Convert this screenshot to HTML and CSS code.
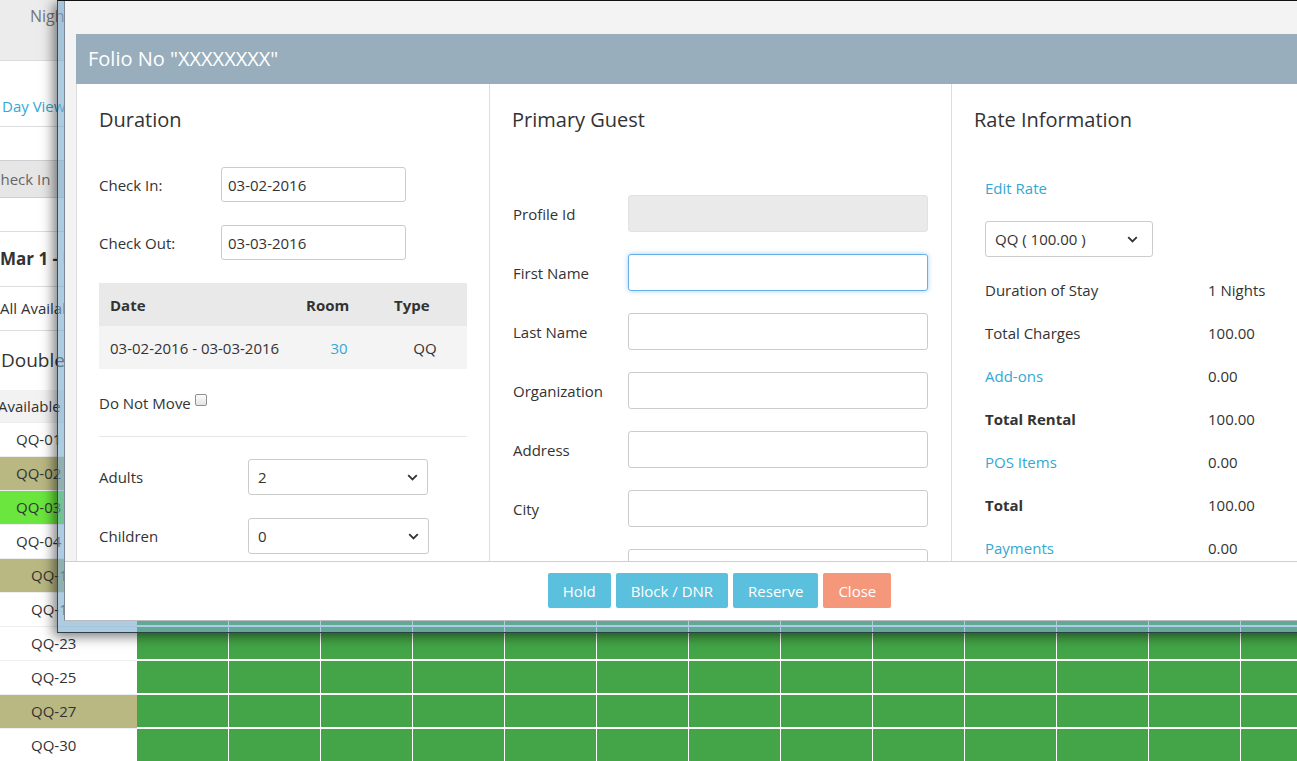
FILE: index.html
```html
<!DOCTYPE html>
<html>
<head>
<meta charset="utf-8">
<link rel="stylesheet" href="styles.css">
</head>
<body>
<div class="page">
  <div class="bg-head"><span>Nights</span></div>
  <div class="bg-sec sec-day"><span class="link">Day View</span></div>
  <div class="bg-sec sec-btn"><span class="ghost-btn">Check In</span></div>
  <div class="bg-sec sec-date">Mar 1 - Mar 31</div>
  <div class="bg-sec sec-avail">All Available</div>
  <div class="bg-sec sec-type">Double Queen</div>
  <div class="bg-row row-availhead"><div class="lbl">Available</div></div>
  <div class="bg-row"><div class="lbl up">QQ-01</div><div class="cells"><i></i><i></i><i></i><i></i><i></i><i></i><i></i><i></i><i></i><i></i><i></i><i></i><i></i></div></div>
  <div class="bg-row"><div class="lbl up olive">QQ-02</div><div class="cells"><i></i><i></i><i></i><i></i><i></i><i></i><i></i><i></i><i></i><i></i><i></i><i></i><i></i></div></div>
  <div class="bg-row"><div class="lbl up lime">QQ-03</div><div class="cells"><i></i><i></i><i></i><i></i><i></i><i></i><i></i><i></i><i></i><i></i><i></i><i></i><i></i></div></div>
  <div class="bg-row"><div class="lbl up">QQ-04</div><div class="cells"><i></i><i></i><i></i><i></i><i></i><i></i><i></i><i></i><i></i><i></i><i></i><i></i><i></i></div></div>
  <div class="bg-row"><div class="lbl olive">QQ-12</div><div class="cells"><i></i><i></i><i></i><i></i><i></i><i></i><i></i><i></i><i></i><i></i><i></i><i></i><i></i></div></div>
  <div class="bg-row"><div class="lbl">QQ-15</div><div class="cells"><i></i><i></i><i></i><i></i><i></i><i></i><i></i><i></i><i></i><i></i><i></i><i></i><i></i></div></div>
  <div class="bg-row"><div class="lbl">QQ-23</div><div class="cells"><i></i><i></i><i></i><i></i><i></i><i></i><i></i><i></i><i></i><i></i><i></i><i></i><i></i></div></div>
  <div class="bg-row"><div class="lbl">QQ-25</div><div class="cells"><i></i><i></i><i></i><i></i><i></i><i></i><i></i><i></i><i></i><i></i><i></i><i></i><i></i></div></div>
  <div class="bg-row"><div class="lbl olive">QQ-27</div><div class="cells"><i></i><i></i><i></i><i></i><i></i><i></i><i></i><i></i><i></i><i></i><i></i><i></i><i></i></div></div>
  <div class="bg-row"><div class="lbl">QQ-30</div><div class="cells"><i></i><i></i><i></i><i></i><i></i><i></i><i></i><i></i><i></i><i></i><i></i><i></i><i></i></div></div>
</div>

<div class="window">
  <div class="client">
    <div class="modal">
      <div class="modal-header">Folio No "XXXXXXXX"</div>
      <div class="modal-body">
        <div class="col col1">
          <h3>Duration</h3>
          <div class="frow first">
            <label class="l1">Check In:</label>
            <input class="inp date" type="text" value="03-02-2016">
          </div>
          <div class="frow">
            <label class="l1">Check Out:</label>
            <input class="inp date" type="text" value="03-03-2016">
          </div>
          <div class="rtable">
            <div class="rt-head">
              <div class="c-date">Date</div><div class="c-room">Room</div><div class="c-type">Type</div>
            </div>
            <div class="rt-row">
              <div class="c-date">03-02-2016 - 03-03-2016</div><div class="c-room center link">30</div><div class="c-type center">QQ</div>
            </div>
          </div>
          <div class="dnm">Do Not Move <span class="chk"></span></div>
          <div class="sep"></div>
          <div class="frow sel-row">
            <label class="l2">Adults</label>
            <div class="select s-adult"><span>2</span><svg width="11" height="7" viewBox="0 0 11 7"><path d="M1.2 1.2 L5.5 5.5 L9.8 1.2" fill="none" stroke="#333" stroke-width="1.8"/></svg></div>
          </div>
          <div class="frow sel-row">
            <label class="l2">Children</label>
            <div class="select s-child"><span>0</span><svg width="11" height="7" viewBox="0 0 11 7"><path d="M1.2 1.2 L5.5 5.5 L9.8 1.2" fill="none" stroke="#333" stroke-width="1.8"/></svg></div>
          </div>
        </div>
        <div class="col col2">
          <h3>Primary Guest</h3>
          <div class="grow first"><label>Profile Id</label><input class="inp wide disabled" type="text" disabled></div>
          <div class="grow"><label>First Name</label><input class="inp wide focus" type="text"></div>
          <div class="grow"><label>Last Name</label><input class="inp wide" type="text"></div>
          <div class="grow"><label>Organization</label><input class="inp wide" type="text"></div>
          <div class="grow"><label>Address</label><input class="inp wide" type="text"></div>
          <div class="grow"><label>City</label><input class="inp wide" type="text"></div>
          <div class="grow"><label></label><input class="inp wide" type="text"></div>
        </div>
        <div class="col col3">
          <h3>Rate Information</h3>
          <div class="edit-rate link">Edit Rate</div>
          <div class="select s-rate"><span>QQ ( 100.00 )</span><svg width="11" height="7" viewBox="0 0 11 7"><path d="M1.2 1.2 L5.5 5.5 L9.8 1.2" fill="none" stroke="#333" stroke-width="1.8"/></svg></div>
          <div class="rates">
            <div class="rrow"><span class="rl">Duration of Stay</span><span>1 Nights</span></div>
            <div class="rrow"><span class="rl">Total Charges</span><span>100.00</span></div>
            <div class="rrow"><span class="rl link">Add-ons</span><span>0.00</span></div>
            <div class="rrow"><span class="rl bold">Total Rental</span><span>100.00</span></div>
            <div class="rrow"><span class="rl link">POS Items</span><span>0.00</span></div>
            <div class="rrow"><span class="rl bold">Total</span><span>100.00</span></div>
            <div class="rrow"><span class="rl link">Payments</span><span>0.00</span></div>
          </div>
        </div>
      </div>
    </div>
    <div class="modal-footer">
      <button class="btn info">Hold</button>
      <button class="btn info">Block / DNR</button>
      <button class="btn info">Reserve</button>
      <button class="btn close">Close</button>
    </div>
  </div>
</div>
</body>
</html>
```

FILE: styles.css
```css
* { box-sizing: border-box; }
html, body {
  margin: 0;
  padding: 0;
  width: 1297px;
  height: 761px;
  overflow: hidden;
  background: #fff;
  font-family: "Open Sans", "Liberation Sans", sans-serif;
  font-size: 15px;
  color: #333;
}
.link { color: #33a8d4; }
.bold { font-weight: 700; }
.center { text-align: center; }

/* background page */
.page { position: relative; width: 1297px; }
.bg-head {
  height: 61px;
  background: #ececec;
  border-bottom: 1px solid #dcdcdc;
  padding: 4px 0 0 30px;
  font-size: 16px;
  color: #777;
  line-height: 24px;
}
.bg-sec { border-bottom: 1px solid #ddd; }
.sec-day { height: 66px; padding: 33px 0 0 2px; line-height: 24px; }
.sec-btn { height: 105px; padding-top: 33px; }
.ghost-btn {
  display: block;
  width: 120px;
  height: 38px;
  margin-left: -10px;
  background: #e6e6e6;
  border: 1px solid #cfcfcf;
  color: #666;
  line-height: 36px;
  padding-left: 0;
}
.sec-date { height: 55px; padding-top: 14px; font-weight: 700; font-size: 17px; line-height: 26px; }
.sec-avail { height: 44px; padding-top: 9px; line-height: 24px; }
.sec-type { height: 59px; border-bottom: none; padding: 16px 0 0 1px; font-size: 19px; line-height: 26px; }
.bg-row { display: flex; height: 34px; }
.row-availhead { height: 33px; }
.row-availhead .lbl { background: #f2f2f2; padding-left: 0; margin-left: -2px; width: 139px; }
.lbl {
  width: 137px;
  flex: none;
  padding-left: 31px;
  line-height: 33px;
  border-bottom: 1px solid #eee;
}
.lbl.up { padding-left: 16px; }
.lbl.olive { background: #b9b883; }
.lbl.lime { background: #6ae63e; }
.cells { display: flex; }
.cells i {
  display: block;
  width: 92px;
  height: 34px;
  background: #43a547;
  border-right: 1px solid #fff;
  border-bottom: 2px solid #fff;
}

/* window */
.window {
  position: absolute;
  left: 57px;
  top: 0;
  width: 1324px;
  height: 633px;
  border-top: 1px solid #111;
  border-left: 1px solid #3e4a55;
  border-bottom: 1px solid #2f3f48;
  padding: 0 0 11px 6px;
  background: rgba(120, 170, 205, 0.6);
  box-shadow: -3px 3px 12px rgba(0, 0, 0, 0.55);
}
.client {
  width: 1310px;
  height: 620px;
  background: #f3f3f3;
  border-left: 1px solid #7b8894;
  border-bottom: 1px solid #bcbcbc;
  display: flex;
  flex-direction: column;
}
.modal { padding: 33px 0 0 11px; }
.modal-header {
  height: 50px;
  background: #98aebd;
  color: #fff;
  font-size: 20px;
  line-height: 50px;
  padding-left: 12px;
}
.modal-body {
  height: 477px;
  background: #fff;
  border-left: 1px solid #ddd;
  display: flex;
  overflow: hidden;
}
.col { padding: 24px 22px 0 22px; flex: none; }
.col1 { width: 413px; border-right: 1px solid #ddd; }
.col2 { width: 462px; border-right: 1px solid #ddd; }
.col3 { width: 410px; }
h3 {
  margin: 0;
  font-size: 20px;
  font-weight: 400;
  line-height: 24px;
  color: #333;
}

.frow { display: flex; align-items: center; margin-top: 23px; }
.frow.first { margin-top: 35px; }
.frow label.l1 { width: 122px; flex: none; }
.frow label.l2 { width: 149px; flex: none; }
.inp {
  height: 35px;
  border: 1px solid #ccc;
  border-radius: 3px;
  font-family: "Open Sans", "Liberation Sans", sans-serif;
  font-size: 15px;
  color: #333;
  padding: 0 6px;
  background: #fff;
  outline: none;
}
.inp.date { width: 185px; }
.rtable { margin-top: 23px; }
.rt-head, .rt-row { display: flex; height: 43px; align-items: center; }
.rt-head { background: #e9e9e9; font-weight: 700; }
.rt-row { background: #f4f4f4; }
.c-date { width: 196px; padding-left: 11px; }
.c-room { width: 88px; padding-left: 11px; }
.c-room.center { padding-left: 0; }
.c-type { width: 84px; padding-left: 11px; }
.c-type.center { padding-left: 0; }
.dnm { margin-top: 24px; line-height: 20px; display: flex; align-items: center; }
.chk {
  display: inline-block;
  width: 12px;
  height: 12px;
  margin: -6px 0 0 4px;
  border: 1px solid #8f8f8f;
  border-radius: 2px;
  background: linear-gradient(#fcfcfc, #e4e4e4);
}
.sep { margin-top: 23px; height: 1px; background: #e6e6e6; }
.sel-row.frow { margin-top: 22px; }
.sel-row + .sel-row.frow { margin-top: 23px; }
.select {
  height: 36px;
  border: 1px solid #ccc;
  border-radius: 3px;
  display: flex;
  align-items: center;
  justify-content: space-between;
  padding: 0 9px 0 9px;
  background: #fff;
}
.select svg { flex: none; }
.s-adult { width: 180px; }
.s-child { width: 181px; }

.grow { display: flex; align-items: center; margin-top: 22px; }
.grow.first { margin-top: 63px; }
.grow label { width: 116px; flex: none; padding-left: 1px; }
.inp.wide { width: 300px; height: 37px; }
.inp.disabled { background: #eaeaea; border-color: #e2e2e2; }
.inp.focus { border-color: #66afe9; box-shadow: 0 0 5px rgba(102, 175, 233, 0.6); }

.col3 .edit-rate { margin: 46px 0 0 11px; line-height: 20px; }
.s-rate { width: 168px; margin: 23px 0 0 11px; padding-left: 9px; padding-right: 14px; }
.rates { margin: 11px 0 0 11px; }
.rrow { display: flex; height: 43px; align-items: center; }
.rl { width: 223px; flex: none; }

.modal-footer {
  height: 59px;
  background: #fff;
  border-top: 1px solid #cfcfcf;
  display: flex;
  justify-content: center;
  gap: 5px;
  padding-top: 11px;
}
.btn {
  height: 35px;
  border: none;
  border-radius: 2px;
  color: #fff;
  font-family: "Open Sans", "Liberation Sans", sans-serif;
  font-size: 15px;
  padding: 0 15px;
}
.btn.info { background: #5bc0de; }
.btn.close { background: #f4977a; }
```
